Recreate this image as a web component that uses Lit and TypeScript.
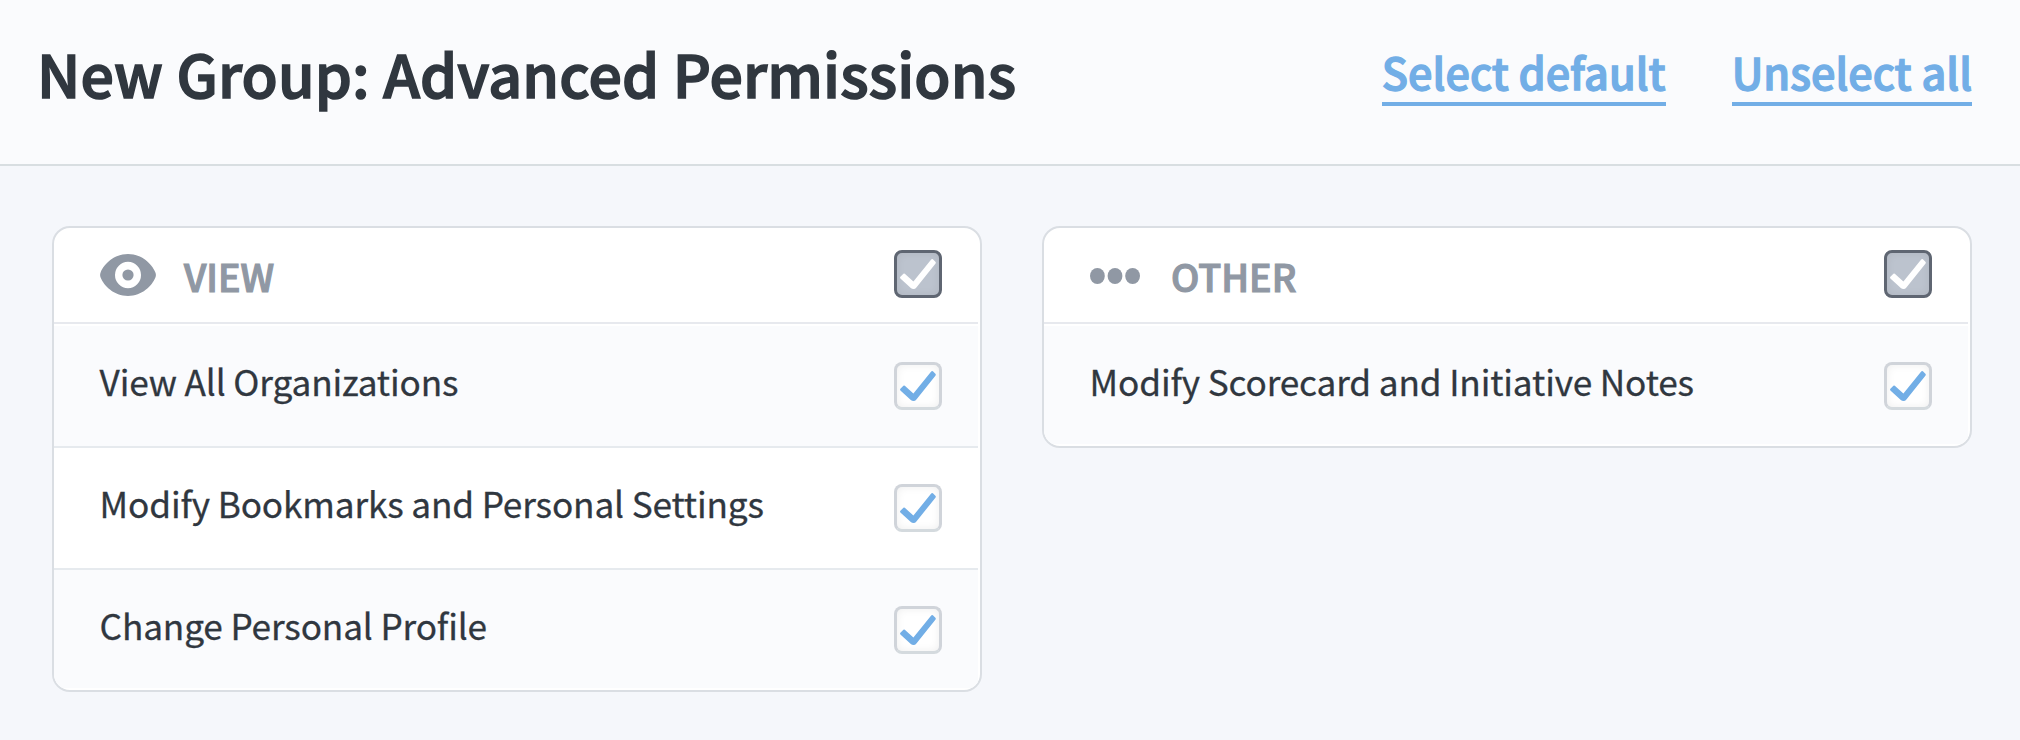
import { LitElement, html, css, svg, nothing } from "lit";
import { customElement, property } from "lit/decorators.js";

type IconName = "eye" | "dots";

interface PermissionGroup {
  title: string;
  icon: IconName;
  permissions: string[];
}

const GROUPS: PermissionGroup[] = [
  {
    title: "VIEW",
    icon: "eye",
    permissions: [
      "View All Organizations",
      "Modify Bookmarks and Personal Settings",
      "Change Personal Profile",
    ],
  },
  {
    title: "OTHER",
    icon: "dots",
    permissions: ["Modify Scorecard and Initiative Notes"],
  },
];

@customElement("check-box")
class CheckBox extends LitElement {
  @property({ type: Boolean, reflect: true }) checked = false;
  @property({ type: Boolean, reflect: true }) solid = false;

  static styles = css`
    :host {
      display: block;
      box-sizing: border-box;
      width: 48px;
      height: 48px;
      border: 3px solid #d0d4da;
      border-bottom-color: #d4dade;
      border-radius: 8px;
      background: #fff;
      box-shadow: inset 0 0 8px rgba(0, 0, 0, 0.07);
      color: #72aee6;
      cursor: pointer;
    }
    :host([solid]) {
      border-color: #5f6672;
      background: #bcc3ce;
      color: #fff;
    }
    svg {
      display: block;
    }
  `;

  render() {
    return html`<svg width="42" height="42" viewBox="0 0 42 42">
      ${this.checked
        ? svg`<path
            d="M3.4 23.8L6.4 20.8Q7.1 20.2 7.8 20.8L16.4 28.6L34.2 6.4Q35 5.6 35.9 6.3L38.4 8.7Q39.2 9.5 38.6 10.4L19.4 34.6Q18.2 36.1 16.5 36.1Q15 36.1 13.8 35L3.4 25.4Q2.6 24.6 3.4 23.8Z"
            fill="currentColor" />`
        : nothing}
    </svg>`;
  }
}

@customElement("permission-card")
class PermissionCard extends LitElement {
  @property({ attribute: false }) group!: PermissionGroup;

  static styles = css`
    :host {
      display: block;
      box-sizing: border-box;
      border: 2px solid #dadee3;
      border-radius: 18px;
      background: #fff;
      overflow: hidden;
      padding: 0 2px 2px 0;
    }
    .head,
    .row {
      display: flex;
      box-sizing: border-box;
      align-items: flex-start;
      justify-content: space-between;
      padding: 0 36px 0 46px;
    }
    .head {
      height: 96px;
      border-bottom: 2px solid #e7e9ee;
      margin-bottom: 2px;
      padding-top: 22px;
      color: #9098a4;
    }
    .title {
      display: flex;
      align-items: flex-start;
    }
    .title svg {
      display: block;
    }
    .eye {
      margin: 4px 28px 0 0;
    }
    .dots {
      margin: 18px 31px 0 0;
    }
    .name {
      font-size: 37.6px;
      font-weight: 500;
      line-height: 51px;
      -webkit-text-stroke: 1.2px currentColor;
    }
    .row {
      height: 122px;
      padding-top: 36px;
      border-bottom: 2px solid #e6eaee;
      background: #fafbfd;
      color: #30373f;
    }
    .row:nth-child(odd) {
      background: #fff;
    }
    .row:last-child {
      height: 118px;
      border-bottom: 0;
    }
    .label {
      font-size: 35.2px;
      line-height: 47px;
      letter-spacing: -0.14px;
      -webkit-text-stroke: 0.3px currentColor;
      white-space: nowrap;
      margin: -5px 0 0 -0.4px;
    }
  `;

  private icon() {
    return this.group.icon === "eye"
      ? html`<svg class="eye" width="56" height="42" viewBox="0 0 56 42">
          <path
            fill="currentColor"
            fill-rule="evenodd"
            d="M28 0C42 0 52 10 55.4 18.4Q56.4 21 55.4 23.6C52 32 42 42 28 42S4 32 .6 23.6Q-.4 21 .6 18.4C4 10 14 0 28 0ZM28 7.8a13 13.2 0 1 0 0 26.4a13 13.2 0 1 0 0-26.4Z"
          />
          <circle cx="28" cy="21" r="5.6" fill="currentColor" />
        </svg>`
      : html`<svg class="dots" width="50" height="16" viewBox="0 0 50 16">
          ${[7.4, 25, 42.6].map(
            (x) => svg`<ellipse cx=${x} cy="8" rx="7.4" ry="8" fill="currentColor" />`
          )}
        </svg>`;
  }

  render() {
    return html`
      <div class="head">
        <div class="title">${this.icon()}<span class="name">${this.group.title}</span></div>
        <check-box checked solid></check-box>
      </div>
      ${this.group.permissions.map(
        (p) => html`<div class="row">
          <span class="label">${p}</span><check-box checked></check-box>
        </div>`
      )}
    `;
  }
}

@customElement("app-root")
class AppRoot extends LitElement {
  static styles = css`
    :host {
      display: block;
      box-sizing: border-box;
      min-height: 740px;
      background: #f5f7fb;
      font-family: "Noto Sans CJK SC", "Noto Sans", sans-serif;
    }
    .header {
      display: flex;
      box-sizing: border-box;
      height: 166px;
      align-items: flex-start;
      justify-content: space-between;
      padding: 36px 48px 0 37px;
      border-bottom: 2px solid #d8dee1;
      background: #fafbfd;
    }
    h1 {
      margin: 0;
      font-size: 59px;
      font-weight: 500;
      line-height: 73px;
      letter-spacing: 0.14px;
      -webkit-text-stroke: 1.6px currentColor;
      color: #30373f;
    }
    .actions {
      display: flex;
      gap: 66px;
      padding-top: 11px;
    }
    .link {
      height: 55px;
      border-bottom: 4px solid #72aee6;
      color: #72aee6;
      font-size: 43.2px;
      font-weight: 500;
      line-height: 48px;
      -webkit-text-stroke: 1.3px currentColor;
      cursor: pointer;
    }
    .cards {
      display: grid;
      grid-template-columns: 930px 930px;
      gap: 60px;
      align-items: start;
      padding: 60px 48px 0 52px;
    }
  `;

  render() {
    return html`
      <header class="header">
        <h1>New Group: Advanced Permissions</h1>
        <nav class="actions">
          <a class="link">Select default</a>
          <a class="link">Unselect all</a>
        </nav>
      </header>
      <main class="cards">
        ${GROUPS.map((g) => html`<permission-card .group=${g}></permission-card>`)}
      </main>
    `;
  }
}
